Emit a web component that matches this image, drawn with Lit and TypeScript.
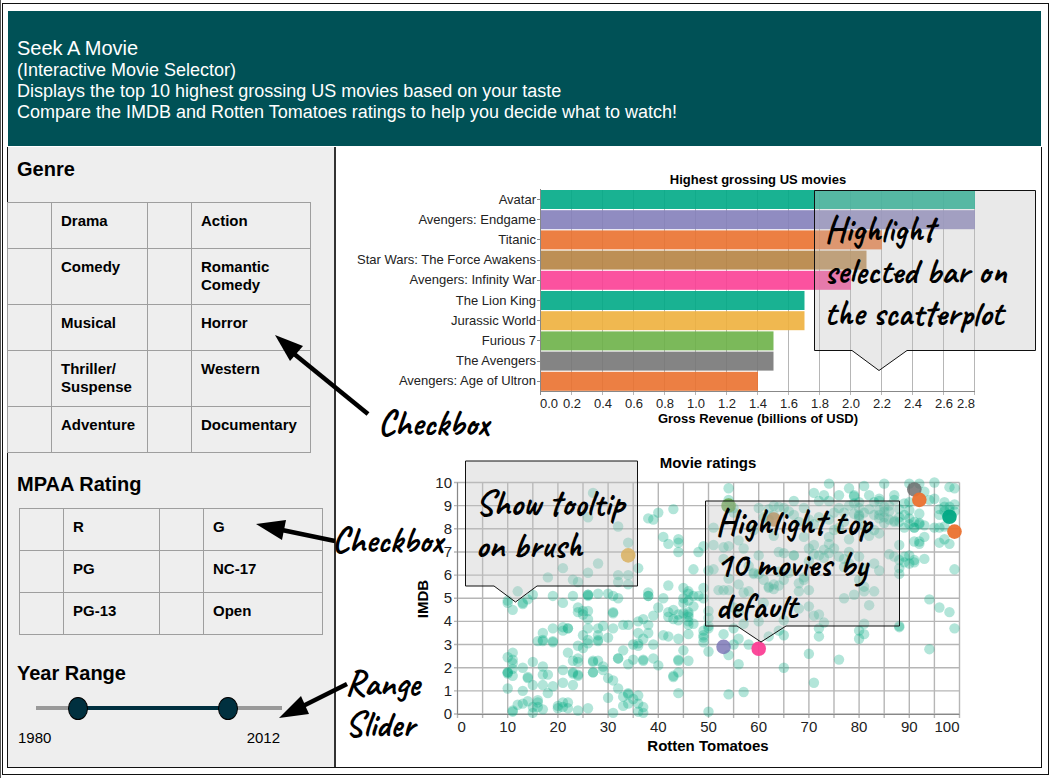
import { LitElement, html, css, svg } from "lit";
import { customElement, state, property } from "lit/decorators.js";

interface Movie {
  title: string;
  gross: number;
  color: string;
}

const MOVIES: Movie[] = [
  { title: "Avatar", gross: 2.8, color: "#00aa86" },
  { title: "Avengers: Endgame", gross: 2.8, color: "#847fba" },
  { title: "Titanic", gross: 2.2, color: "#ea712f" },
  { title: "Star Wars: The Force Awakens", gross: 2.1, color: "#b68342" },
  { title: "Avengers: Infinity War", gross: 2.0, color: "#fb3f95" },
  { title: "The Lion King", gross: 1.7, color: "#00aa86" },
  { title: "Jurassic World", gross: 1.7, color: "#eeb03d" },
  { title: "Furious 7", gross: 1.5, color: "#6db148" },
  { title: "The Avengers", gross: 1.5, color: "#777777" },
  { title: "Avengers: Age of Ultron", gross: 1.4, color: "#ea712f" },
];

/* IMDB ratings grouped by Rotten Tomatoes score. */
const RATINGS: Record<number, number[]> = {
  10: [4.9, 4.8, 2.45, 1.8, 1.8, 1.75, 1.1],
  11: [4.5, 2.65, 2.35, 2.2, 1.95, 1.65, 0.1, 0.15],
  12: [5.3, 0.4],
  13: [4.8, 4.75, 2, 1, 0.45],
  14: [4.95, 1.55, 1.6, 0.55],
  15: [5.15, 2.25, 1.25, 0.3, 0.05],
  16: [3.15, 0.6, 0.5, 0.3],
  17: [3.5, 3.2, 3.15, 2.05, 1.7, 1.25, 0.2],
  18: [5.9, 1.7, 0.9],
  19: [5.1, 3.7, 3.15, 3.1, 1.2],
  20: [0.35, 0.25],
  21: [6.3, 4.8, 3.75, 3.6, 1.9, 1.35, 0.5, 0.3],
  22: [3.7, 3.7, 2.65, 0.5, 0.25],
  23: [5.8, 5.1, 2.3, 1.8, 1.75, 1.25],
  24: [5.7, 4.6, 4.4, 2.95, 2.4, 2.25, 1.7, 1.65, 0.15],
  25: [4.45, 4.3, 3.4, 2.85],
  26: [8.5, 6.1, 5.15, 5.15, 5.1, 4.45, 4.1, 3.7, 3.2, 3.05, 0.25],
  27: [9.55, 2.3, 2.25, 1.8, 1.8],
  28: [6.5, 5.2, 3.7, 3.4, 3.2, 3.15, 2.3],
  29: [3.8, 2.05, 1.9],
  30: [5.2, 3.3, 1.55, 0.7],
  31: [5.1, 4.4, 4.35, 3.7, 1.45, 0.05],
  32: [8.1, 6, 5.7, 5, 2.4, 2.4, 1.1],
  33: [3.85, 2.75, 0.75, 0.35],
  34: [7.4, 6, 5.6, 3.85, 2.15, 0.9, 0.85, 0.45],
  35: [3, 2.35, 0.65],
  36: [6.3, 4, 3.5, 3.05, 2.95, 0.8, 0.45, 0.1],
  37: [4.1, 3.25, 2.35, 2.3, 0.3, 0.05],
  38: [8.45, 5.25, 5.1, 5.1, 3.85, 3.5],
  39: [8.4, 4.25, 3, 2.4],
  40: [8.7, 4.6, 2.1],
  41: [7.65, 5, 3.4],
  42: [7.35, 5.55, 4.4, 4.2, 3.35],
  43: [8.85, 4.5, 4.1, 1.65, 1.6],
  44: [7.55, 7.4, 7, 4.3, 4.05, 3.25, 2.35, 2.3, 1.8, 0.9],
  45: [5.45, 5, 4.8, 4.35, 2.75],
  46: [5.3, 5.2, 4.9, 4.4, 4.3, 4.2, 4, 3.85, 3.45, 2.3],
  47: [6.25, 5.1, 4.65, 3.9],
  48: [7, 5.1],
  49: [7.25, 5.45, 5, 3.6, 3.4, 3.3, 3.1],
  50: [6.2, 4.45, 4.15, 3.8, 3.7, 2.7, 0.1],
  51: [8.05, 7.3, 6.25],
  52: [5.35],
  53: [7.2, 6.7, 5.35, 3.45],
  54: [9.75, 9.25, 7.25, 5.85, 5.35, 2.55, 0.85],
  55: [8.9, 8.7, 4.6, 3.7, 3],
  56: [7.5, 5.6, 4.4, 3.25, 2.15],
  57: [7.15, 5.25, 3.9, 0.95],
  58: [6.4, 5.3, 3],
  59: [7.95, 6.1, 6.05],
  60: [8.9, 6.85, 6.05, 4],
  61: [8.5, 5.8, 4.8],
  62: [8.85, 8.4, 5.5, 5.45, 3.35],
  63: [9, 8.6, 7.7, 5.6, 5.4],
  64: [8.95, 7, 6.15, 5.55, 3.6],
  65: [8.9, 6.95, 5.8, 4.05, 3.4, 2],
  66: [8.75, 6.1],
  67: [9.2, 8.6, 6.85, 6.85],
  68: [8.3, 5.65, 5.3, 4.55],
  69: [8.9, 7.65, 5.9, 5.8],
  70: [8.4, 7.15, 6.6, 5.35, 4.65, 2.6],
  71: [9.55, 8.2, 7.3, 6.9, 4.25, 1.35],
  72: [9.2, 8.5, 6.85, 4.3, 3.7, 3.35],
  73: [9.45, 7.1, 6.75, 3.95],
  74: [9.95, 9.2, 8.4, 7.65, 7.35, 6.95],
  75: [8.7, 7.95, 7.15],
  76: [9.45, 8.9, 8.05, 6.8, 2.35],
  77: [8.7, 8.3, 6.7, 6.35, 5],
  78: [9.75, 9, 7.55, 7, 6.5],
  79: [9.45, 9.4, 9.1, 8.65, 5.15],
  80: [9.15, 8.9, 8.6, 8.55, 8.45, 6.8, 5.8, 3.6, 3.25],
  81: [9.85, 8.7, 8.1, 6.3, 5.5, 5.3, 3.9, 3.45],
  82: [9.45, 8.85, 7.7, 4.7],
  83: [9.15, 8.6, 7.95, 6.5, 5.3],
  84: [9.3, 9.2, 8.8, 8.6, 8.45, 7.8, 6.2],
  85: [9.95, 8.95, 8.75, 8.5, 8.25],
  86: [9, 8.75, 8.4, 6.9],
  87: [9.45, 9.25, 8.35, 8.3, 6.8],
  88: [8.85, 8.5, 8.3, 7.3, 6.65, 6.3, 6.05, 3.8, 3.75],
  89: [9.1, 8.6, 8.05, 6.8, 6.55],
  90: [9.95, 9.15, 8.8, 8.45, 8.2, 6.85, 6.5],
  91: [8.3, 8.05, 8.05, 7.45, 6.65, 6.55],
  92: [9.95, 8.65, 8.25, 8.2, 7.45, 7.35],
  93: [9.6, 8.15, 7.65, 6.7],
  94: [9.25, 4.95, 2.8],
  95: [10, 9.3, 8.05],
  96: [8.85, 8.6, 8.05, 7.4, 4.6],
  97: [9.15, 8.95, 8.75, 8.1, 7.55],
  98: [9.8, 8.95, 8.8, 8.5, 7.35, 4.4],
  99: [9.75, 9.05, 8.75, 6.25, 3.7],
};

const TOP_RATINGS: [number, number, string, number][] = [
  [34, 6.85, "#e8a828", 0.85],
  [54, 9, "#5a9d3a", 0.8],
  [63, 8.4, "#b77a36", 0.8],
  [53, 2.9, "#7570b3", 0.8],
  [60, 2.82, "#fb3f95", 0.95],
  [91, 9.7, "#666666", 0.8],
  [92, 9.25, "#ea712f", 0.95],
  [98, 8.52, "#00a884", 0.95],
  [99, 7.88, "#ea712f", 0.95],
];

const range = (n: number) => Array.from({ length: n }, (_, i) => i);

interface Callout {
  x: number;
  y: number;
  w: number;
  h: number;
  tail: [number, number, number];
  drop: number;
  baseline: number;
  lines: string[];
}

const callout = ({ x, y, w, h, tail, drop, baseline, lines }: Callout) => svg`
  <path class="bubble" d="M${x} ${y}h${w}v${h}H${tail[2]}L${tail[1]} ${y + h + drop}L${tail[0]} ${y + h}H${x}z"/>
  ${lines.map((line, i) => svg`<text class="hand" x=${x + 10} y=${baseline + i * 42}>${line}</text>`)}
`;

const handStyles = css`
  .hand {
    font: 700 35px Caveat, Lato, cursive;
    fill: #000;
  }
  .bubble {
    fill: #c2c2c2;
    fill-opacity: 0.36;
    stroke: #111;
    stroke-width: 1;
  }
`;

const chartStyles = css`
  :host {
    display: block;
  }
  svg {
    display: block;
    width: 100%;
    height: auto;
    font-family: "Liberation Sans", Arial, sans-serif;
    fill: #222;
  }
  .grid {
    stroke: #b6b6b6;
    stroke-width: 1;
  }
  .axis {
    fill: none;
    stroke: #888;
    stroke-width: 1;
  }
  .end {
    text-anchor: end;
  }
  .mid {
    text-anchor: middle;
  }
  .title {
    font-weight: 700;
    fill: #000;
  }
`;

@customElement("gross-chart")
export class GrossChart extends LitElement {
  static styles = [
    chartStyles,
    handStyles,
    css`
      .small {
        font-size: 13px;
      }
    `,
  ];

  render() {
    const left = 204;
    const top = 43;
    const bottom = 244;
    const unit = 155;
    const step = 20.2;
    return html`
      <svg viewBox="-1 0 705 300" role="img" aria-label="Highest grossing US movies">
        <text class="title small mid" x="421" y="37">Highest grossing US movies</text>
        ${range(15).map((i) => {
          const x = Math.round(left + i * 0.2 * unit) - 0.5;
          return svg`<path class="grid" d="M${x} ${top}V${bottom + 4}"/>`;
        })}
        ${MOVIES.map((m, i) => svg`
          <rect x=${left} y=${top + i * step} width=${m.gross * unit} height="19" fill=${m.color} opacity="0.9"/>
          <path class="axis" d="M${left - 4} ${Math.round(top + 9 + i * step) + 0.5}h4"/>
          <text class="small end" x="199" y=${Math.floor(top + 14 + i * step)}>${m.title}</text>
        `)}
        <path class="axis" d="M203.5 42V${bottom}.5H638M203.5 ${bottom}v4"/>
        ${range(15).map((i) => {
          const x = left + i * 0.2 * unit;
          const cls = i === 0 ? "small" : i === 14 ? "small end" : "small mid";
          return svg`<text class=${cls} x=${i === 0 ? x - 1 : x} y="261">${(i * 0.2).toFixed(1)}</text>`;
        })}
        <text class="title small mid" x="421" y="276">Gross Revenue (billions of USD)</text>
        ${callout({
          x: 477.5, y: 43.5, w: 221, h: 160, tail: [515, 542, 570], drop: 20, baseline: 94,
          lines: ["Highlight", "selected bar on", "the scatterplot"],
        })}
      </svg>
    `;
  }
}

@customElement("ratings-chart")
export class RatingsChart extends LitElement {
  static styles = [
    chartStyles,
    handStyles,
    css`
      .large {
        font-size: 15px;
      }
      .grid {
        stroke-width: 1.4;
      }
      .dot {
        fill: #00aa80;
        fill-opacity: 0.3;
      }
    `,
  ];

  render() {
    const px = (v: number) => 120.5 + v * 5.02;
    const py = (v: number) => 267 - v * 23.15;
    return html`
      <svg viewBox="-1 0 705 320" role="img" aria-label="Movie ratings">
        <text class="title large mid" x="371" y="21">Movie ratings</text>
        ${range(21).map((i) => svg`<path class="grid" d="M${px(i * 5)} ${py(10)}V271"/>`)}
        ${range(11).map((i) => svg`
          <path class="grid" d="M117 ${py(i)}H${px(100)}"/>
          <text class="large end" x="115" y=${py(i) + 5}>${i}</text>
        `)}
        <path class="axis" d="M120.5 ${py(10)}V267.5H${px(100)}"/>
        ${range(11).map((i) => {
          const cls = i === 0 ? "large" : i === 10 ? "large end" : "large mid";
          return svg`<text class=${cls} x=${px(i * 10)} y="285">${i * 10}</text>`;
        })}
        ${Object.entries(RATINGS).map(([score, list]) =>
          list.map((r) => svg`<circle class="dot" cx=${px(Number(score))} cy=${py(r)} r="5.2"/>`),
        )}
        ${TOP_RATINGS.map(([x, y, color, opacity]) =>
          svg`<circle cx=${px(x)} cy=${py(y)} r="7.3" fill=${color} opacity=${opacity}/>`,
        )}
        <text class="title large mid" x="371" y="304">Rotten Tomatoes</text>
        <text class="title large mid" transform="translate(91 152) rotate(-90)">IMDB</text>
        ${callout({
          x: 128.5, y: 14, w: 172, h: 125, tail: [157, 178.5, 200], drop: 16, baseline: 68,
          lines: ["Show tooltip", "on brush"],
        })}
        ${callout({
          x: 368.5, y: 54, w: 194, h: 125, tail: [400, 424, 449], drop: 16, baseline: 87,
          lines: ["Highlight top", "10 movies by", "default"],
        })}
      </svg>
    `;
  }
}

@customElement("choice-table")
export class ChoiceTable extends LitElement {
  @property({ attribute: false }) rows: string[][] = [];
  @property() caption = "";

  static styles = css`
    :host {
      display: block;
    }
    table {
      width: 304px;
      table-layout: fixed;
      border-collapse: collapse;
      font: 700 15px/18px "Liberation Sans", Arial, sans-serif;
    }
    .tick {
      width: 44px;
    }
    .name {
      width: 96px;
    }
    tr {
      height: 42px;
    }
    td {
      padding: 9px 4px 10px 9px;
      border: 1px solid #9e9e9e;
      vertical-align: top;
    }
    :host([roomy]) tr {
      height: 46px;
    }
    input {
      display: block;
      appearance: none;
      width: 24px;
      height: 18px;
      margin: 0;
    }
    label {
      display: block;
    }
  `;

  render() {
    return html`
      <table aria-label=${this.caption}>
        <colgroup>
          <col class="tick" />
          <col class="name" />
          <col class="tick" />
          <col />
        </colgroup>
        <tbody>
          ${this.rows.map((row, r) => html`
            <tr>
              ${row.map((name, c) => html`
                <td><input type="checkbox" id="opt-${r}-${c}" /></td>
                <td><label for="opt-${r}-${c}">${name}</label></td>
              `)}
            </tr>
          `)}
        </tbody>
      </table>
    `;
  }
}

@customElement("year-range")
export class YearRange extends LitElement {
  @state() private from = 1984.6;
  @state() private to = 2005.8;

  static styles = css`
    :host {
      display: block;
      font: 15px/18px "Liberation Sans", Arial, sans-serif;
    }
    .slider {
      position: relative;
      width: 246px;
      height: 24px;
      margin-left: 28px;
      display: flex;
      align-items: center;
    }
    .track {
      flex: 1;
      height: 4px;
      padding: 0 10px;
      background: #999;
    }
    .fill {
      height: 4px;
      background: #00303f;
    }
    input {
      position: absolute;
      inset: 0;
      width: 100%;
      height: 24px;
      margin: 0;
      appearance: none;
      background: none;
      pointer-events: none;
    }
    input::-webkit-slider-thumb {
      appearance: none;
      box-sizing: border-box;
      width: 20px;
      height: 23px;
      border: 1px solid #000;
      border-radius: 50%;
      background: #00303f;
      pointer-events: auto;
    }
    .ends {
      display: flex;
      justify-content: space-between;
      width: 262px;
      margin: 9px 0 0 10px;
    }
  `;

  render() {
    const pct = (y: number) => ((y - 1980) / 32) * 100;
    return html`
      <div class="slider">
        <div class="track">
          <div class="fill" style="margin-left:${pct(this.from)}%;width:${pct(this.to) - pct(this.from)}%"></div>
        </div>
        <input type="range" aria-label="From year" min="1980" max="2012" step="any" .value=${String(this.from)}
          @input=${(e: Event) => (this.from = Math.min(this.to, Number((e.target as HTMLInputElement).value)))} />
        <input type="range" aria-label="To year" min="1980" max="2012" step="any" .value=${String(this.to)}
          @input=${(e: Event) => (this.to = Math.max(this.from, Number((e.target as HTMLInputElement).value)))} />
      </div>
      <div class="ends"><span>1980</span><span>2012</span></div>
    `;
  }
}

@customElement("app-root")
export class AppRoot extends LitElement {
  static styles = [
    handStyles,
    css`
      :host {
        display: block;
        background: #fff;
        color: #000;
        font-family: "Liberation Sans", Arial, sans-serif;
      }
      .page {
        border-left: 1px solid #555;
        padding: 3px 2px 3px 1px;
      }
      .frame {
        border: 1px solid #111;
        padding: 7px 6px 6px 4px;
      }
      header {
        margin: 0 1px 1px;
        padding: 25px 9px 23px;
        background: #005156;
        color: #fff;
        font-size: 18px;
        line-height: 21px;
      }
      h1 {
        margin: 0;
        font-weight: 400;
        font-size: 20px;
        line-height: 24px;
      }
      header p {
        margin: 0;
      }
      .workspace {
        display: grid;
        grid-template-columns: 328px 1fr;
        border: 1px solid #111;
        border-top: 0;
      }
      aside {
        position: relative;
        z-index: 1;
        padding: 10px 0 19px;
        background: #eee;
        border-right: 2px solid #333;
      }
      section {
        position: relative;
      }
      h2 {
        margin: 0 0 12px 9px;
        font-size: 20px;
        line-height: 24px;
      }
      .genre h2 {
        margin-bottom: 21px;
      }
      .genre choice-table {
        margin-left: -1px;
      }
      .mpaa {
        margin-top: 19px;
      }
      .mpaa choice-table {
        margin-left: 11px;
      }
      .years {
        margin-top: 26px;
      }
      .years h2 {
        margin-bottom: 11px;
      }
      .note {
        position: absolute;
        left: 0;
        top: 0;
        width: 500px;
        height: 100px;
        overflow: visible;
        pointer-events: none;
      }
      .shaft {
        stroke: #000;
        stroke-width: 4.5;
      }
    `,
  ];

  render() {
    return html`
      <div class="page">
        <div class="frame">
          <header>
            <h1>Seek A Movie</h1>
            <p>(Interactive Movie Selector)</p>
            <p>Displays the top 10 highest grossing US movies based on your taste</p>
            <p>Compare the IMDB and Rotten Tomatoes ratings to help you decide what to watch!</p>
          </header>
          <div class="workspace">
            <aside>
              <section class="genre">
                <h2>Genre</h2>
                <choice-table
                  roomy
                  caption="Genre"
                  .rows=${[
                    ["Drama", "Action"],
                    ["Comedy", "Romantic Comedy"],
                    ["Musical", "Horror"],
                    ["Thriller/ Suspense", "Western"],
                    ["Adventure", "Documentary"],
                  ]}
                ></choice-table>
                <svg class="note">
                  <path class="shaft" d="M285 196L360 257"/>
                  <path d="M267 178L295 189L282 204z"/>
                  <text class="hand" x="370" y="278">Checkbox</text>
                </svg>
              </section>
              <section class="mpaa">
                <h2>MPAA Rating</h2>
                <choice-table
                  caption="MPAA Rating"
                  .rows=${[
                    ["R", "G"],
                    ["PG", "NC-17"],
                    ["PG-13", "Open"],
                  ]}
                ></choice-table>
                <svg class="note">
                  <path class="shaft" d="M274 58L327 69"/>
                  <path d="M248 52L278 48L274 68z"/>
                  <text class="hand" x="324" y="80">Checkbox</text>
                </svg>
              </section>
              <section class="years">
                <h2>Year Range</h2>
                <year-range></year-range>
                <svg class="note">
                  <path class="shaft" d="M295 45L339 23"/>
                  <path d="M271 57L293 35L301 53z"/>
                  <text class="hand" x="337" y="34">Range</text>
                  <text class="hand" x="337" y="75">Slider</text>
                </svg>
              </section>
            </aside>
            <main>
              <gross-chart></gross-chart>
              <ratings-chart></ratings-chart>
            </main>
          </div>
        </div>
      </div>
    `;
  }
}
